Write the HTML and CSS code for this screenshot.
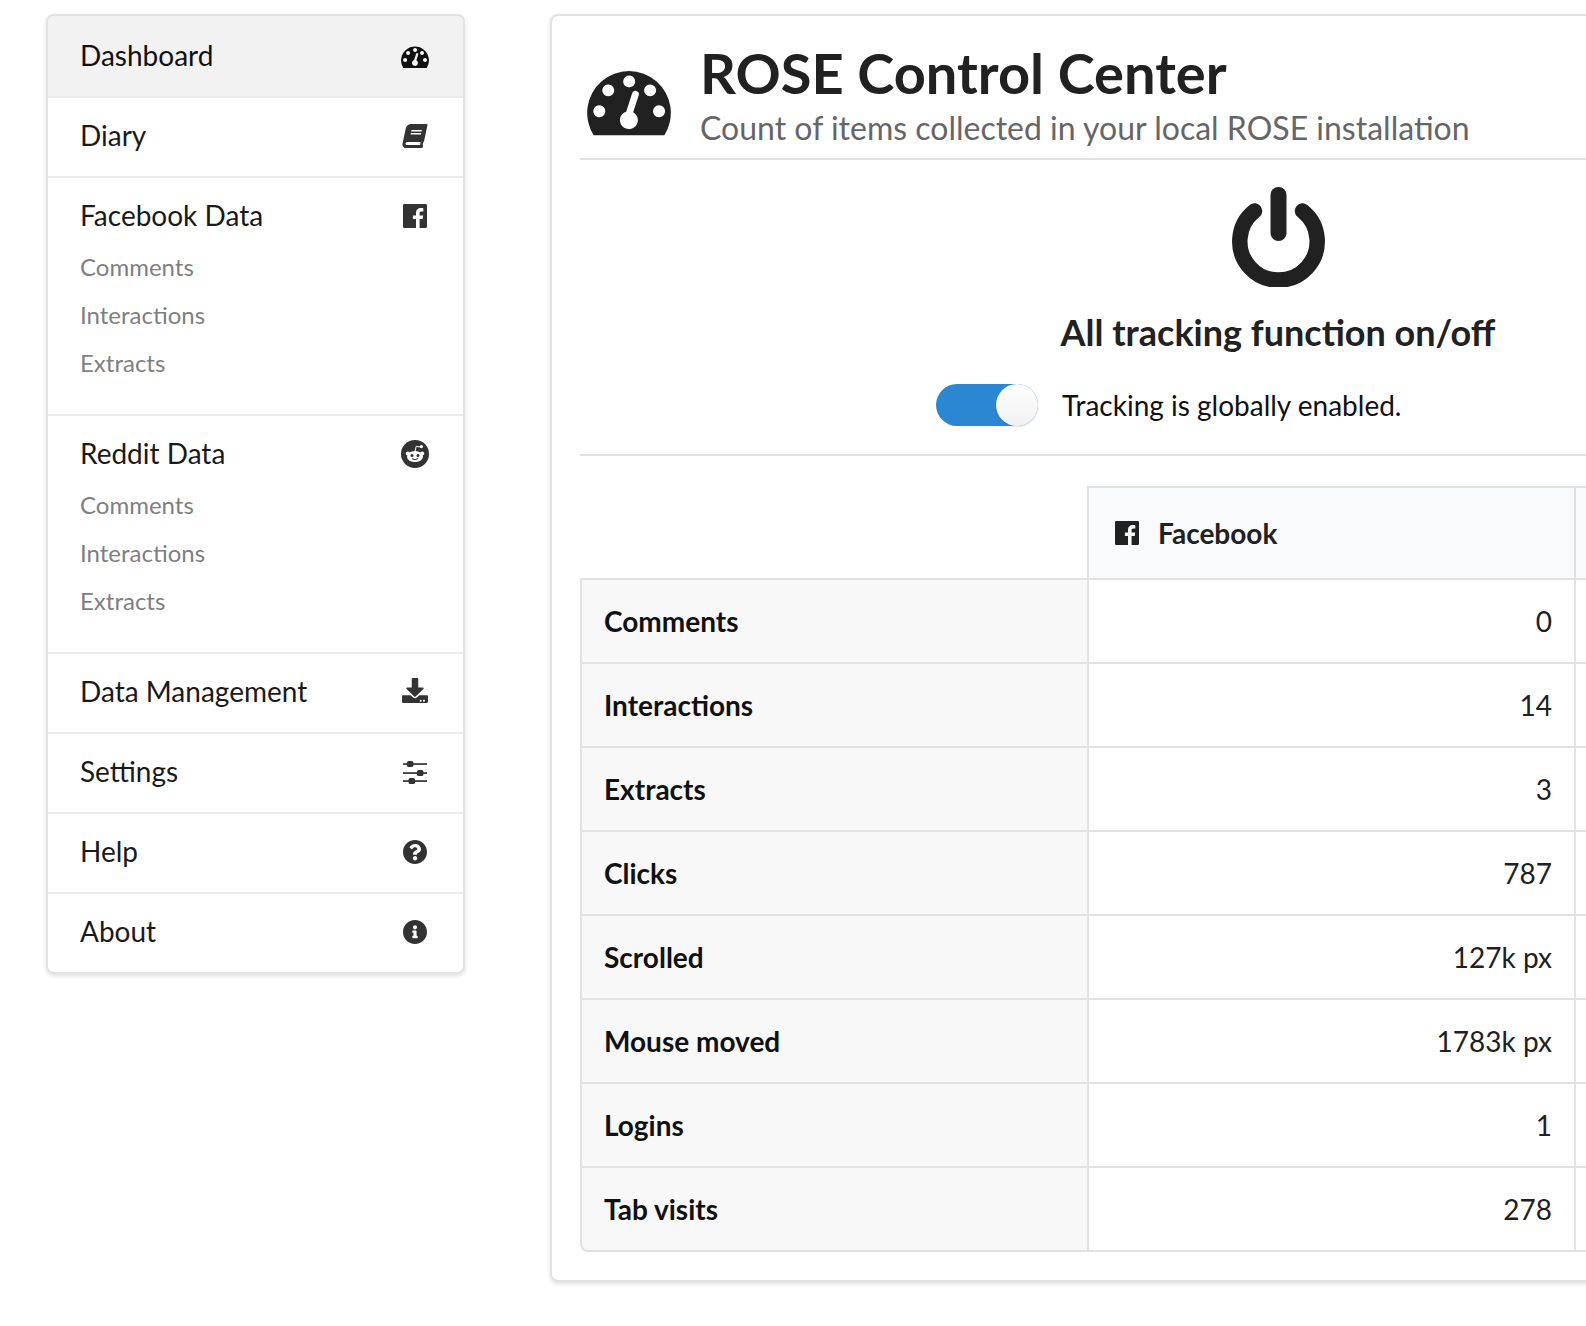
FILE: index.html
```html
<!DOCTYPE html>
<html lang="en">
<head>
<meta charset="utf-8">
<title>ROSE Control Center</title>
<link rel="stylesheet" href="styles.css">
</head>
<body>
<svg class="defs" aria-hidden="true">
  <symbol id="i-gauge" viewBox="140 210 253 197">
    <path fill-rule="evenodd" d="M160 407A126 126 0 1 1 373 407ZM267 227a18 18 0 1 0 .01 0ZM204 254a18 18 0 1 0 .01 0ZM330 254a18 18 0 1 0 .01 0ZM177 317a18 18 0 1 0 .01 0ZM357 317a18 18 0 1 0 .01 0ZM258 336L276 281A10 10 0 0 1 296 286L279 338A27 27 0 1 1 258 336Z"/>
  </symbol>
  <symbol id="i-book" viewBox="0 0 570 512">
    <path transform="skewX(-12) translate(108 0)" d="M448 360V24c0-13.3-10.7-24-24-24H96C43 0 0 43 0 96v320c0 53 43 96 96 96h328c13.3 0 24-10.7 24-24v-16c0-7.5-3.5-14.3-8.9-18.7-4.2-15.4-4.2-59.3 0-74.7 5.4-4.3 8.9-11.1 8.9-18.6zM128 134c0-3.3 2.7-6 6-6h212c3.3 0 6 2.7 6 6v20c0 3.3-2.7 6-6 6H134c-3.3 0-6-2.7-6-6v-20zm0 64c0-3.3 2.7-6 6-6h212c3.3 0 6 2.7 6 6v20c0 3.3-2.7 6-6 6H134c-3.3 0-6-2.7-6-6v-20zm253.4 250H96c-17.7 0-32-14.3-32-32 0-17.6 14.4-32 32-32h285.4c-1.9 17.1-1.9 46.9 0 64z"/>
  </symbol>
  <symbol id="i-fb" viewBox="0 0 24 24">
    <path d="M1.3 0H22.7A1.3 1.3 0 0 1 24 1.3V22.7A1.3 1.3 0 0 1 22.7 24H16.6V14.9H19.7L20.2 11.4H16.6V9.2C16.6 8.1 16.9 7.4 18.4 7.4H20.3V4.2C20 4.2 18.9 4.1 17.7 4.1C15 4.1 13 5.8 13 8.8V11.4H9.9V14.9H13V24H1.3A1.3 1.3 0 0 1 0 22.7V1.3A1.3 1.3 0 0 1 1.3 0Z"/>
  </symbol>
  <symbol id="i-reddit" viewBox="0 0 28 28">
    <circle cx="14" cy="14" r="14"/>
    <g fill="#fff">
      <ellipse cx="14" cy="16.5" rx="8" ry="5.6"/>
      <circle cx="6.8" cy="13.6" r="2"/>
      <circle cx="21.2" cy="13.6" r="2"/>
      <circle cx="20.4" cy="6.6" r="1.6"/>
    </g>
    <path d="M14 11.5L15.2 6.400L20 7" fill="none" stroke="#fff" stroke-width="1"/>
    <circle cx="11" cy="15.4" r="1.5"/>
    <circle cx="17" cy="15.4" r="1.5"/>
    <path d="M10.8 18.6Q14 20.6 17.2 18.6" fill="none" stroke="#333" stroke-width="1"/>
  </symbol>
  <symbol id="i-download" viewBox="0 0 512 512" preserveAspectRatio="none">
    <path d="M216 0h80c13.3 0 24 10.7 24 24v168h87.7c17.8 0 26.7 21.5 14.1 34.1L269.7 378.3c-7.5 7.5-19.8 7.5-27.3 0L90.1 226.1c-12.6-12.6-3.7-34.1 14.1-34.1H192V24c0-13.3 10.7-24 24-24zm296 376v112c0 13.3-10.7 24-24 24H24c-13.3 0-24-10.7-24-24V376c0-13.3 10.7-24 24-24h146.7l49 49c20.1 20.1 52.5 20.1 72.6 0l49-49H488c13.3 0 24 10.7 24 24zm-124 88c0-11-9-20-20-20s-20 9-20 20 9 20 20 20 20-9 20-20zm64 0c0-11-9-20-20-20s-20 9-20 20 9 20 20 20 20-9 20-20z"/>
  </symbol>
  <symbol id="i-sliders" viewBox="0 -1 24 24">
    <rect x="0" y="2.2" width="24" height="1.7"/>
    <rect x="0" y="11.2" width="24" height="1.7"/>
    <rect x="0" y="19.2" width="24" height="1.7"/>
    <rect x="4" y="0" width="6.4" height="6" rx="1.6"/>
    <rect x="14" y="9" width="6.4" height="6" rx="1.6"/>
    <rect x="5.600" y="17" width="6.4" height="6" rx="1.6"/>
  </symbol>
  <symbol id="i-help" viewBox="8 8 496 496">
    <path d="M504 256c0 136.997-111.043 248-248 248S8 392.997 8 256C8 119.083 119.043 8 256 8s248 111.083 248 248zM262.655 90c-54.497 0-89.255 22.957-116.549 63.758-3.536 5.286-2.353 12.415 2.715 16.258l34.699 26.31c5.205 3.947 12.621 3.008 16.665-2.122 17.864-22.658 30.113-35.797 57.303-35.797 20.429 0 45.698 13.148 45.698 32.958 0 14.976-12.363 22.667-32.534 33.976C247.128 238.528 216 254.941 216 296v4c0 6.627 5.373 12 12 12h56c6.627 0 12-5.373 12-12v-1.333c0-28.462 83.186-29.647 83.186-106.667 0-58.002-60.165-102-116.531-102zM256 338c-25.365 0-46 20.635-46 46 0 25.364 20.635 46 46 46s46-20.636 46-46c0-25.365-20.635-46-46-46z"/>
  </symbol>
  <symbol id="i-info" viewBox="8 8 496 496">
    <path d="M256 8C119.043 8 8 119.083 8 256c0 136.997 111.043 248 248 248s248-111.003 248-248C504 119.083 392.957 8 256 8zm0 110c23.196 0 42 18.804 42 42s-18.804 42-42 42-42-18.804-42-42 18.804-42 42-42zm56 254c0 6.627-5.373 12-12 12h-88c-6.627 0-12-5.373-12-12v-24c0-6.627 5.373-12 12-12h12v-64h-12c-6.627 0-12-5.373-12-12v-24c0-6.627 5.373-12 12-12h64c6.627 0 12 5.373 12 12v100h12c6.627 0 12 5.373 12 12v24z"/>
  </symbol>
</svg>

<div class="page">
  <nav class="sidebar">
    <a class="item active"><span class="item-row"><span class="label">Dashboard</span><span class="icon-box"><svg class="ico ico-dash"><use href="#i-gauge"/></svg></span></span></a>
    <a class="item"><span class="item-row"><span class="label">Diary</span><span class="icon-box"><svg class="ico ico-book"><use href="#i-book"/></svg></span></span></a>
    <div class="item">
      <span class="item-row"><span class="label">Facebook Data</span><span class="icon-box"><svg class="ico ico-24"><use href="#i-fb"/></svg></span></span>
      <div class="submenu">
        <a class="subitem">Comments</a>
        <a class="subitem">Interactions</a>
        <a class="subitem">Extracts</a>
      </div>
    </div>
    <div class="item">
      <span class="item-row"><span class="label">Reddit Data</span><span class="icon-box"><svg class="ico ico-28"><use href="#i-reddit"/></svg></span></span>
      <div class="submenu">
        <a class="subitem">Comments</a>
        <a class="subitem">Interactions</a>
        <a class="subitem">Extracts</a>
      </div>
    </div>
    <a class="item"><span class="item-row"><span class="label">Data Management</span><span class="icon-box"><svg class="ico ico-download"><use href="#i-download"/></svg></span></span></a>
    <a class="item"><span class="item-row"><span class="label">Settings</span><span class="icon-box"><svg class="ico ico-24"><use href="#i-sliders"/></svg></span></span></a>
    <a class="item"><span class="item-row"><span class="label">Help</span><span class="icon-box"><svg class="ico ico-24"><use href="#i-help"/></svg></span></span></a>
    <a class="item"><span class="item-row"><span class="label">About</span><span class="icon-box"><svg class="ico ico-24"><use href="#i-info"/></svg></span></span></a>
  </nav>

  <main class="card">
    <header class="head">
      <svg class="head-icon"><use href="#i-gauge"/></svg>
      <div class="head-text">
        <h1 class="title">ROSE Control Center</h1>
        <p class="subtitle">Count of items collected in your local ROSE installation</p>
      </div>
    </header>

    <section class="power">
      <svg class="power-icon" viewBox="0 0 93 100">
        <path d="M22.500 24A38.700 38.700 0 1 0 70.500 24" fill="none" stroke="#212121" stroke-width="15.500" stroke-linecap="round"/>
        <path d="M46.500 8V46" fill="none" stroke="#212121" stroke-width="16" stroke-linecap="round"/>
      </svg>
      <h2 class="power-title">All tracking function on/off</h2>
      <div class="toggle-row">
        <span class="toggle"><span class="knob"></span></span>
        <span class="toggle-label">Tracking is globally enabled.</span>
      </div>
    </section>

    <table class="stats">
      <colgroup><col class="c1"><col class="c2"><col class="c3"></colgroup>
      <thead>
        <tr>
          <th class="blank"></th>
          <th class="net"><span class="net-row"><svg class="net-icon"><use href="#i-fb"/></svg>Facebook</span></th>
          <th class="net"></th>
        </tr>
      </thead>
      <tbody>
        <tr><th>Comments</th><td>0</td><td></td></tr>
        <tr><th>Interactions</th><td>14</td><td></td></tr>
        <tr><th>Extracts</th><td>3</td><td></td></tr>
        <tr><th>Clicks</th><td>787</td><td></td></tr>
        <tr><th>Scrolled</th><td>127k px</td><td></td></tr>
        <tr><th>Mouse moved</th><td>1783k px</td><td></td></tr>
        <tr><th>Logins</th><td>1</td><td></td></tr>
        <tr><th>Tab visits</th><td>278</td><td></td></tr>
      </tbody>
    </table>
  </main>
</div>
</body>
</html>
```

FILE: styles.css
```css
* { box-sizing: border-box; }

html, body {
  margin: 0;
  height: 100%;
  overflow: hidden;
  background: #fff;
}

body {
  font-family: Lato, "Noto Sans", sans-serif;
  color: #212121;
  font-size: 28px;
  line-height: 28px;
  font-feature-settings: "liga" 1;
}

.defs { display: none; }

.page {
  display: flex;
  align-items: flex-start;
  gap: 85px;
  width: 1960px;
  padding: 14px 0 0 46px;
}

/* Sidebar */
.sidebar {
  flex: none;
  width: 419px;
  border: 2px solid #e2e2e3;
  border-radius: 8px;
  background: #fff;
  box-shadow: 0 2px 4px rgba(34, 36, 38, .14);
  overflow: hidden;
  color: #1a1a1a;
}

.item {
  display: block;
  padding: 24px 32px 26px;
  border-top: 2px solid #ececec;
}

.item:first-child { border-top-color: transparent; }
.item.active { background: #f2f2f2; color: #111; }

.item-row {
  display: flex;
  justify-content: space-between;
  align-items: center;
}

.label {
  line-height: 26px;
  margin-bottom: 2px;
}

.icon-box {
  display: flex;
  justify-content: center;
  align-items: center;
  width: 32px;
  height: 28px;
}

.ico { display: block; fill: #333; }
.ico-dash { width: 28px; height: 22px; margin-top: 2px; fill: #111; }
.ico-book { width: 28px; height: 24px; }
.ico-24 { width: 24px; height: 24px; }
.ico-28 { width: 28px; height: 28px; }
.ico-download { width: 26px; height: 25px; margin-bottom: 3px; }

.submenu { margin: 13px 0 1px; }

.subitem {
  display: block;
  height: 48px;
  font-size: 24px;
  line-height: 48px;
  color: #7f7f7f;
}

/* Main card */
.card {
  flex: none;
  width: 1454px;
  padding: 0 26px 28px 28px;
  border: 2px solid #e2e2e3;
  border-radius: 8px;
  background: #fff;
  box-shadow: 0 2px 4px rgba(34, 36, 38, .14);
}

.head {
  display: flex;
  align-items: flex-start;
  height: 144px;
  border-bottom: 2px solid #e2e2e3;
}

.head-icon {
  flex: none;
  width: 84px;
  height: 67px;
  margin: 53px 29px 0 7px;
  fill: #212121;
}

.title {
  margin: 28px 0 0;
  font-size: 56px;
  font-weight: 700;
  line-height: 58px;
  color: #212121;
}

.subtitle {
  margin: 6px 0 0;
  font-size: 32px;
  line-height: 40px;
  color: #666;
}

.power {
  display: flex;
  flex-direction: column;
  align-items: center;
  padding: 27px 0 28px;
  border-bottom: 2px solid #e2e2e3;
}

.power-icon { display: block; width: 93px; height: 100px; }

.power-title {
  margin: 23px 0 0;
  font-size: 36px;
  font-weight: 700;
  line-height: 44px;
  color: #212121;
}

.toggle-row {
  display: flex;
  align-self: flex-start;
  align-items: center;
  gap: 24px;
  margin: 30px 0 0 356px;
  color: #111;
}

.toggle {
  display: flex;
  justify-content: flex-end;
  width: 102px;
  height: 42px;
  border-radius: 21px;
  background: #2b87d1;
}

.knob {
  width: 42px;
  height: 42px;
  border-radius: 50%;
  background: linear-gradient(#fff, #f1f1f1);
  box-shadow: 0 1px 2px rgba(34, 36, 38, .15);
}

/* Table */
.stats {
  width: 1396px;
  margin: 30px 0 0;
  table-layout: fixed;
  border-collapse: separate;
  border-spacing: 0;
}

.c1 { width: 507px; }
.c2 { width: 487px; }

.stats thead th { height: 92px; }

.stats .blank { border: 0; background: none; }

.stats .net {
  padding: 0 22px 0 26px;
  border-top: 2px solid #e2e2e3;
  border-left: 2px solid #e2e2e3;
  background: #f9fafb;
  font-weight: 700;
  text-align: left;
  color: #212121;
}

.net-row { display: flex; align-items: center; gap: 19px; }
.net-icon { flex: none; width: 24px; height: 24px; fill: #212121; }

.stats tbody th,
.stats tbody td {
  height: 84px;
  padding: 0 22px;
  border-top: 2px solid #e2e2e3;
  border-left: 2px solid #e2e2e3;
}

.stats tbody th {
  background: #f8f8f8;
  font-weight: 700;
  text-align: left;
  color: #111;
}

.stats tbody td { text-align: right; color: #212121; }

.stats tbody tr:last-child th,
.stats tbody tr:last-child td { border-bottom: 2px solid #e2e2e3; height: 86px; }

.stats tbody tr:last-child th { border-bottom-left-radius: 8px; }
```
